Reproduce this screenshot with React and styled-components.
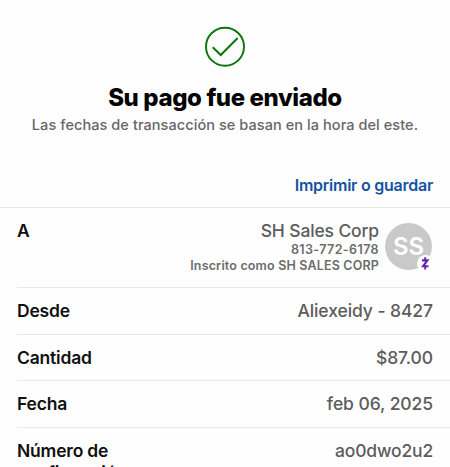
import React from "react";
import styled, { createGlobalStyle } from "styled-components";

const GlobalStyle = createGlobalStyle`
  * {
    box-sizing: border-box;
  }
  body {
    margin: 0;
    background: #fefefe;
    font-family: Inter, "Liberation Sans", sans-serif;
  }
`;

const Page = styled.main`
  width: 100%;
  height: 100vh;
  overflow: hidden;
`;

const Header = styled.header`
  display: flex;
  flex-direction: column;
  align-items: center;
  padding-top: 26px;
  text-align: center;
  svg {
    display: block;
  }
  h1 {
    margin: 15px 0 0;
    font-size: 24px;
    line-height: 30px;
    font-weight: 800;
    letter-spacing: -0.4px;
    color: #050505;
    white-space: nowrap;
  }
  p {
    margin: 2px 0 0;
    font-size: 14.5px;
    line-height: 20px;
    font-weight: 500;
    letter-spacing: 0.07px;
    color: #666;
    white-space: nowrap;
  }
`;

const Actions = styled.div`
  display: flex;
  justify-content: flex-end;
  height: 73px;
  padding: 40px 17px 0 0;
  border-bottom: 1px solid #e6e6e6;
`;

const PrintButton = styled.button`
  height: 20px;
  padding: 0;
  border: 0;
  background: none;
  font: 600 16px/20px Inter, "Liberation Sans", sans-serif;
  letter-spacing: -0.25px;
  color: #1453a3;
  white-space: nowrap;
  cursor: pointer;
`;

const Details = styled.dl`
  margin: 0 0 0 17px;
`;

const Row = styled.div`
  display: flex;
  justify-content: space-between;
  height: ${({ $height }) => $height}px;
  padding: 12px 17px 0 0;
  border-bottom: 1px solid #e9e9e9;
`;

const Label = styled.dt`
  width: 130px;
  font-size: 17.5px;
  line-height: 22px;
  font-weight: 600;
  letter-spacing: -0.2px;
  color: #101010;
`;

const Value = styled.dd`
  margin: 0;
  font-size: 17.5px;
  line-height: 22px;
  font-weight: 500;
  letter-spacing: ${({ $spacing = -0.08 }) => $spacing}px;
  color: #5c5c5c;
  white-space: nowrap;
`;

const Recipient = styled.dd`
  display: flex;
  gap: 6px;
  margin: 0 1px 0 0;
`;

const RecipientInfo = styled.div`
  text-align: right;
  color: #5c5c5c;
  white-space: nowrap;
`;

const RecipientName = styled.div`
  font-size: 17.5px;
  line-height: 22px;
  font-weight: 500;
  letter-spacing: -0.15px;
`;

const RecipientLine = styled.div`
  font-size: 12.5px;
  line-height: 16px;
  font-weight: 600;
  letter-spacing: ${({ $spacing }) => $spacing}px;
  color: #6c6c6c;
`;

const Avatar = styled.div`
  position: relative;
  display: flex;
  align-items: center;
  justify-content: center;
  width: 47px;
  height: 47px;
  margin-top: 3px;
  border-radius: 50%;
  background: #c9c9c9;
  color: #fff;
  font-size: 24px;
  font-weight: 600;
`;

const Badge = styled.span`
  position: absolute;
  right: -2px;
  bottom: -2px;
  display: flex;
  align-items: center;
  justify-content: center;
  width: 17px;
  height: 17px;
  border-radius: 50%;
  background: #fefefe;
`;

const rows = [
  { label: "Desde", value: "Aliexeidy - 8427", height: 47 },
  { label: "Cantidad", value: "$87.00", height: 46 },
  { label: "Fecha", value: "feb 06, 2025", height: 47 },
  { label: "Número de confirmación", value: "ao0dwo2u2", height: 68, spacing: -0.18 },
];

const CheckIcon = () => (
  <svg width="42" height="42" viewBox="0 0 42 42" fill="none" stroke="#0b760b">
    <circle cx="21" cy="20.7" r="19" strokeWidth="1.9" />
    <path d="M8.7 21.2 16.7 29 33.7 12" strokeWidth="2" />
  </svg>
);

const ZelleIcon = () => (
  <svg width="9" height="13" viewBox="0 0 9 13" fill="none" stroke="#6420b4">
    <path d="M1 3.4H6.4L2 9.3H7.5" strokeWidth="2.1" />
    <path d="M4.2 .3V3M4.2 9.8V12.5" strokeWidth="1.9" />
  </svg>
);

const App = () => {
  return (
    <Page>
      <GlobalStyle />
      <Header>
        <CheckIcon />
        <h1>Su pago fue enviado</h1>
        <p>Las fechas de transacción se basan en la hora del este.</p>
      </Header>
      <Actions>
        <PrintButton type="button">Imprimir o guardar</PrintButton>
      </Actions>
      <Details>
        <Row $height={80}>
          <Label>A</Label>
          <Recipient>
            <RecipientInfo>
              <RecipientName>SH Sales Corp</RecipientName>
              <RecipientLine $spacing={0.4}>813-772-6178</RecipientLine>
              <RecipientLine $spacing={0.17}>
                Inscrito como SH SALES CORP
              </RecipientLine>
            </RecipientInfo>
            <Avatar>
              SS
              <Badge>
                <ZelleIcon />
              </Badge>
            </Avatar>
          </Recipient>
        </Row>
        {rows.map((row) => (
          <Row key={row.label} $height={row.height}>
            <Label>{row.label}</Label>
            <Value $spacing={row.spacing}>{row.value}</Value>
          </Row>
        ))}
      </Details>
    </Page>
  );
};

export default App;
